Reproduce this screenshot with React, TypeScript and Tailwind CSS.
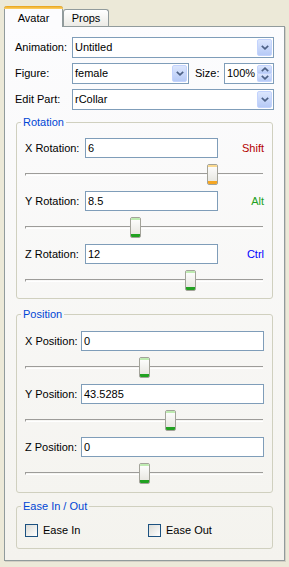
import React from "react";

type SliderRow = { label: string; value: string; thumb: number; hot?: boolean };

const rotation: (SliderRow & { key: string; keyColor: string })[] = [
  { label: "X Rotation:", value: "6", thumb: 182, hot: true, key: "Shift", keyColor: "text-[#B40000]" },
  { label: "Y Rotation:", value: "8.5", thumb: 105, key: "Alt", keyColor: "text-[#21A121]" },
  { label: "Z Rotation:", value: "12", thumb: 160, key: "Ctrl", keyColor: "text-[#0000FF]" },
];

const position: SliderRow[] = [
  { label: "X Position:", value: "0", thumb: 114 },
  { label: "Y Position:", value: "43.5285", thumb: 140 },
  { label: "Z Position:", value: "0", thumb: 114 },
];

function Chevron({ up }: { up?: boolean }) {
  return (
    <svg width="8" height="5" viewBox="0 0 8 5">
      <path
        d={up ? "M0.8 4.2 L4 1.2 L7.2 4.2" : "M0.8 0.8 L4 3.8 L7.2 0.8"}
        fill="none"
        stroke="#4D6185"
        strokeWidth="1.7"
      />
    </svg>
  );
}

function DropButton() {
  return (
    <div className="flex h-[17px] w-[15px] items-center justify-center rounded-[2px] border border-[#C3D3FD] bg-gradient-to-b from-[#DCE6FD] to-[#B6CAF6]">
      <Chevron />
    </div>
  );
}

function Select({ value, className }: { value: string; className: string }) {
  return (
    <div className={`flex h-[21px] items-center border border-[#7F9DB9] bg-white pl-[2px] pr-[1px] ${className}`}>
      <span className="flex-1">{value}</span>
      <DropButton />
    </div>
  );
}

function Thumb({ left, hot }: { left: number; hot?: boolean }) {
  return (
    <div
      className="absolute top-[6px] flex h-[21px] w-[11px] flex-col overflow-hidden rounded-[2px] border border-[#A3A39A] bg-gradient-to-b from-white to-[#E4E3DC]"
      style={{ left }}
    >
      <div className={`h-[2px] ${hot ? "bg-[#FBD98F]" : "bg-[#BEEBB1]"}`} />
      <div className="flex-1" />
      <div className={`h-[3px] ${hot ? "bg-[#F5A623]" : "bg-[#21A121]"}`} />
    </div>
  );
}

function Slider({ thumb, hot }: { thumb: number; hot?: boolean }) {
  return (
    <div className="relative h-[33px]">
      <div className="absolute left-0 right-[1px] top-[15px] h-[3px] border-l border-t border-[#9D9C99] border-b-white border-b" />
      <Thumb left={thumb} hot={hot} />
    </div>
  );
}

function Group({ title, className, children }: { title: string; className: string; children: React.ReactNode }) {
  return (
    <fieldset className={`mx-[1px] rounded-[3px] border border-[#D0D0BF] px-[8px] ${className}`}>
      <legend className="-ml-[4px] px-[2px] leading-[14px] text-[#0046D5]">{title}</legend>
      {children}
    </fieldset>
  );
}

function Checkbox({ label }: { label: string }) {
  return (
    <div className="flex items-center gap-[5px]">
      <div className="h-[13px] w-[13px] border border-[#1C5180] bg-gradient-to-br from-[#DCDCD7] to-white" />
      <span className="leading-[13px]">{label}</span>
    </div>
  );
}

export default function App() {
  return (
    <div className="h-[567px] w-[289px] bg-[#ECE9D8] pl-[4px] pt-[6px] font-['Liberation_Sans',Arial,sans-serif] text-[11px] leading-[13px] text-black">
      <div className="flex h-[20px] items-end">
        <div className="relative z-10 -mb-[1px] flex h-[21px] w-[59px] flex-col rounded-t-[3px] border-x border-[#919B9C] bg-[#FCFCFE]">
          <div className="-mx-[1px] h-[3px] rounded-t-[3px] bg-gradient-to-b from-[#E6A209] to-[#FFD366]" />
          <div className="flex flex-1 items-center justify-center">Avatar</div>
        </div>
        <div className="flex h-[17px] w-[46px] items-center justify-center rounded-t-[3px] border border-b-0 border-[#919B9C] bg-gradient-to-b from-white to-[#ECEBE6]">
          Props
        </div>
      </div>

      <div className="h-[535px] w-[281px] border border-[#919B9C] bg-gradient-to-b from-[#FCFCFE] to-[#F4F3EE] pl-[10px] pr-[10px] pt-[10px] shadow-[1px_1px_0_#D2CFC4]">
        <div className="flex flex-col gap-[5px]">
          <div className="flex items-center">
            <span className="w-[57px]">Animation:</span>
            <Select value="Untitled" className="flex-1" />
          </div>
          <div className="flex items-center">
            <span className="w-[57px]">Figure:</span>
            <Select value="female" className="w-[117px]" />
            <span className="ml-[6px] w-[29px]">Size:</span>
            <div className="flex h-[21px] flex-1 items-center border border-[#7F9DB9] bg-white pl-[2px] pr-[1px]">
              <span className="flex-1">100%</span>
              <div className="flex h-[17px] w-[15px] flex-col">
                <div className="flex h-[9px] items-center justify-center rounded-t-[2px] border border-[#C3D3FD] bg-gradient-to-b from-[#DCE6FD] to-[#B6CAF6]">
                  <Chevron up />
                </div>
                <div className="flex h-[8px] items-center justify-center rounded-b-[2px] border border-t-0 border-[#C3D3FD] bg-gradient-to-b from-[#DCE6FD] to-[#B6CAF6]">
                  <Chevron />
                </div>
              </div>
            </div>
          </div>
          <div className="flex items-center">
            <span className="w-[57px]">Edit Part:</span>
            <Select value="rCollar" className="flex-1" />
          </div>
        </div>

        <Group title="Rotation" className="mt-[5px] pb-[1px] pt-[9px]">
          {rotation.map((r) => (
            <div key={r.label}>
              <div className="flex h-[20px] items-center">
                <span className="w-[60px]">{r.label}</span>
                <div className="flex h-[20px] w-[133px] items-center border border-[#7F9DB9] bg-white pl-[2px]">{r.value}</div>
                <span className={`flex-1 text-right ${r.keyColor}`}>{r.key}</span>
              </div>
              <Slider thumb={r.thumb} hot={r.hot} />
            </div>
          ))}
        </Group>

        <Group title="Position" className="mt-[8px] pb-[2px] pt-[10px]">
          {position.map((r) => (
            <div key={r.label}>
              <div className="flex h-[20px] items-center">
                <span className="w-[56px]">{r.label}</span>
                <div className="flex h-[20px] flex-1 items-center border border-[#7F9DB9] bg-white pl-[2px]">{r.value}</div>
              </div>
              <Slider thumb={r.thumb} />
            </div>
          ))}
        </Group>

        <Group title="Ease In / Out" className="mt-[6px] pb-[11px] pt-[11px]">
          <div className="flex">
            <div className="w-[123px]">
              <Checkbox label="Ease In" />
            </div>
            <Checkbox label="Ease Out" />
          </div>
        </Group>
      </div>
    </div>
  );
}
